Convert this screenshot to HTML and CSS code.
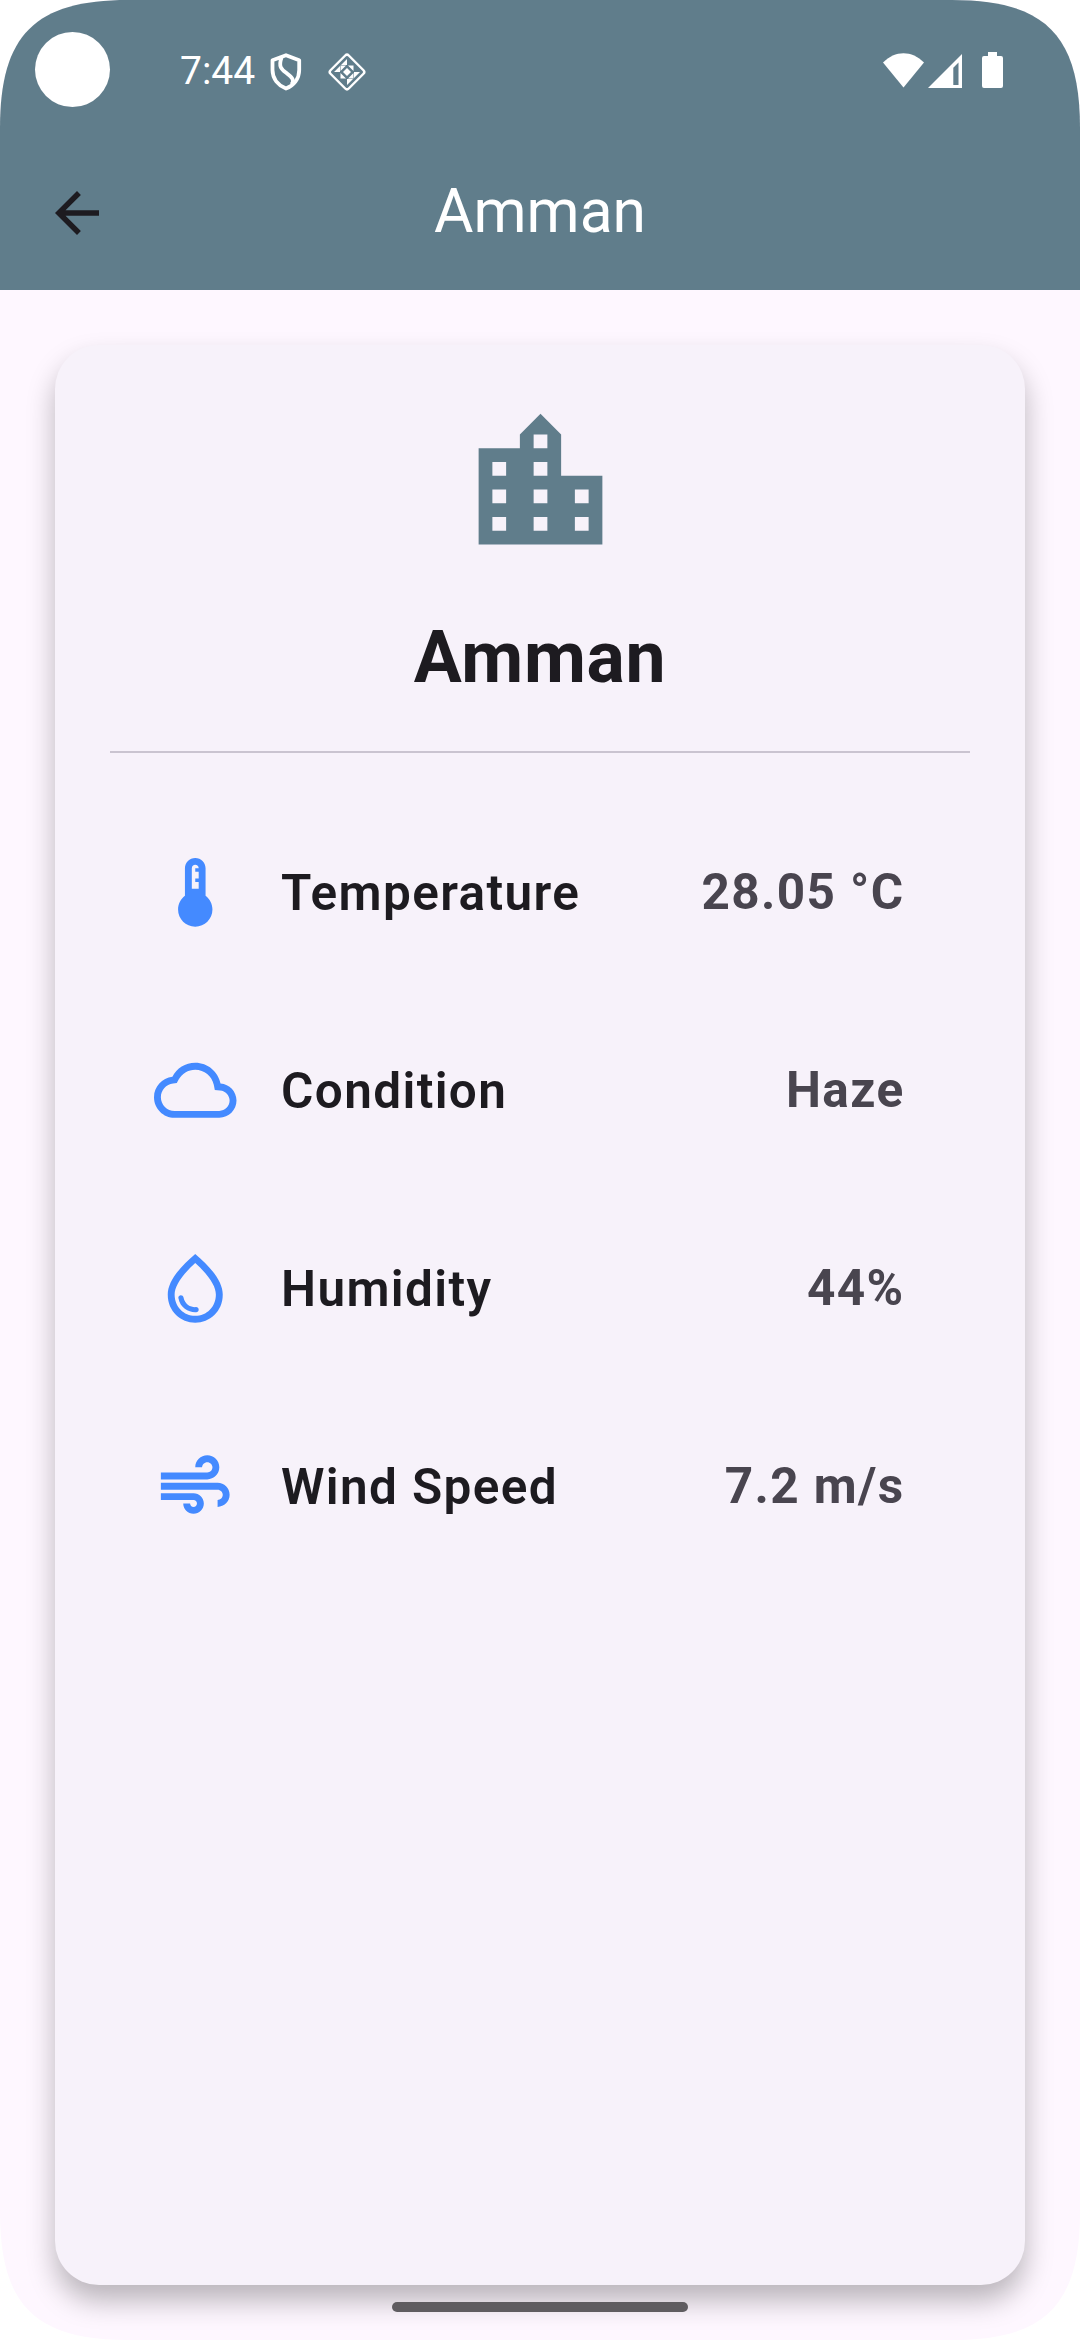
FILE: index.html
```html
<!DOCTYPE html>
<html lang="en">
<head>
<meta charset="utf-8">
<title>Amman</title>
<link rel="stylesheet" href="styles.css">
</head>
<body>
<div class="screen">
  <header class="top">
    <div class="status">
      <div class="status-left">
        <span class="camera"></span>
        <span class="clock">7:44</span>
        <svg class="shield" viewBox="0 0 32 38" fill="none" stroke="#fff" stroke-width="3.800" stroke-linejoin="round"><path d="M16 2.200 29.200 7.200V17C29.200 26 23.500 32.500 16 35.600 8.500 32.500 2.500 26 2.500 17V7.200Z"/><path d="M11.500 4.500C8 14.500 12 16.500 17 20.500S25 27 21.500 31.500"/></svg>
        <svg class="diamond" viewBox="-20 -20 40 40"><rect x="-12.900" y="-12.900" width="25.800" height="25.800" rx="2.500" transform="rotate(45)" fill="none" stroke="#fff" stroke-width="2.400"/><path fill="#fff" d="M0-13V-7H-6ZM-7-6V0H-13ZM13 0 7 6V0ZM0 13V7H6ZM-6.500-6.500H-1L-6.500-1ZM6.500-6.500V-1L1-6.500ZM6.500 6.500H1L6.500 1ZM-6.500 6.500V1L-1 6.500ZM0-4 4 0 0 4-4 0Z"/></svg>
      </div>
      <div class="status-right">
        <svg class="wifi" viewBox="0 0 41 35" fill="#fff"><path d="M0 9.500C12-3 29-3 41 9.500L20.500 34.500Z"/></svg>
        <svg class="signal" viewBox="0 0 34 34" fill="#fff" fill-rule="evenodd"><path d="M34 0V34H0ZM30.500 8.500 25.300 13.700V31H30.500Z"/></svg>
        <svg class="battery" viewBox="0 0 21 36" fill="#fff"><path d="M6 0H15V4H19Q21 4 21 6V34Q21 36 19 36H2Q0 36 0 34V6Q0 4 2 4H6Z"/></svg>
      </div>
    </div>
    <div class="appbar">
      <svg class="back" viewBox="0 0 24 24"><path d="M20 11H7.830l5.590-5.590L12 4l-8 8 8 8 1.410-1.410L7.830 13H20v-2z"/></svg>
      <h1 class="title">Amman</h1>
    </div>
  </header>
  <main class="card">
    <svg class="city-icon" viewBox="0 0 24 24"><path d="M15 11V5l-3-3-3 3v2H3v14h18V11h-6zm-8 8H5v-2h2v2zm0-4H5v-2h2v2zm0-4H5V9h2v2zm6 8h-2v-2h2v2zm0-4h-2v-2h2v2zm0-4h-2V9h2v2zm0-4h-2V5h2v2zm6 12h-2v-2h2v2zm0-4h-2v-2h2v2z"/></svg>
    <h2 class="city">Amman</h2>
    <hr class="rule">
    <ul class="list">
      <li class="row">
        <svg class="icon" viewBox="0 0 24 24"><path d="M15 13V5c0-1.660-1.340-3-3-3S9 3.340 9 5v8c-1.210.91-2 2.370-2 4 0 2.760 2.240 5 5 5s5-2.240 5-5c0-1.630-.79-3.090-2-4zm-4-8c0-.55.45-1 1-1s1 .45 1 1h-1v1h1v2h-1v1h1v2h-2V5z"/></svg>
        <span class="label">Temperature</span><span class="value">28.05 °C</span>
      </li>
      <li class="row">
        <svg class="icon" viewBox="0 0 24 24"><path d="M19.350 10.040C18.670 6.590 15.640 4 12 4 9.110 4 6.600 5.640 5.350 8.040 2.340 8.360 0 10.910 0 14c0 3.310 2.690 6 6 6h13c2.760 0 5-2.240 5-5 0-2.640-2.050-4.780-4.650-4.960zM19 18H6c-2.210 0-4-1.790-4-4 0-2.050 1.530-3.760 3.560-3.970l1.070-.11.5-.95C8.080 7.140 9.940 6 12 6c2.620 0 4.880 1.860 5.390 4.430l.3 1.500 1.530.11c1.560.1 2.780 1.410 2.780 2.960 0 1.650-1.350 3-3 3z"/></svg>
        <span class="label">Condition</span><span class="value">Haze</span>
      </li>
      <li class="row">
        <svg class="icon" viewBox="0 0 24 24"><path d="M12 2c-5.330 4.550-8 8.480-8 11.800 0 4.980 3.800 8.200 8 8.200s8-3.220 8-8.200c0-3.320-2.670-7.250-8-11.800zm0 18c-3.350 0-6-2.570-6-6.200 0-2.340 1.950-5.440 6-9.140 4.050 3.700 6 6.790 6 9.140 0 3.630-2.650 6.200-6 6.200zm-4.170-6c.37 0 .67.26.74.62.41 2.220 2.280 2.980 3.640 2.870.43-.02.79.32.79.75 0 .4-.32.73-.72.75-2.130.13-4.620-1.090-5.190-4.120-.08-.45.28-.87.74-.87z"/></svg>
        <span class="label">Humidity</span><span class="value">44%</span>
      </li>
      <li class="row">
        <svg class="icon" viewBox="0 0 24 24"><path d="M14.500 17c0 1.650-1.350 3-3 3s-3-1.350-3-3h2c0 .55.45 1 1 1s1-.45 1-1-.45-1-1-1H2v-2h9.500c1.650 0 3 1.350 3 3zM19 6.500C19 4.570 17.430 3 15.500 3S12 4.570 12 6.500h2c0-.83.67-1.500 1.500-1.500s1.500.67 1.500 1.500S16.330 8 15.500 8H2v2h13.500c1.930 0 3.500-1.570 3.500-3.500zm-.5 4.500H2v2h16.500c.83 0 1.500.67 1.500 1.500s-.67 1.500-1.500 1.500v2c1.930 0 3.500-1.570 3.500-3.500S20.430 11 18.500 11z"/></svg>
        <span class="label">Wind Speed</span><span class="value">7.2 m/s</span>
      </li>
    </ul>
  </main>
  <div class="home-bar"></div>
</div>
</body>
</html>
```
FILE: styles.css
```css
* { box-sizing: border-box; margin: 0; padding: 0; }
body { background: #fff; font-family: Roboto, sans-serif; }
svg { display: block; flex: none; }
.screen {
  position: relative;
  display: flex;
  flex-direction: column;
  width: 1080px;
  height: 2340px;
  background: #fef7ff;
  clip-path: path("M0 128C0 35 35 0 128 0H952C1045 0 1080 35 1080 128V2212C1080 2305 1045 2340 952 2340H128C35 2340 0 2305 0 2212Z");
}
.top { height: 290px; background: #607d8b; }
.status { display: flex; justify-content: space-between; height: 136px; padding: 32px 77px 0 35px; }
.status-left, .status-right { display: flex; align-items: flex-start; }
.camera { width: 75px; height: 75px; border-radius: 50%; background: #fff; }
.clock { margin: 14px 0 0 70px; width: 76px; font-size: 39px; line-height: 50px; color: #fff; white-space: nowrap; }
.shield { width: 32px; height: 38px; margin: 20.500px 0 0 13.500px; }
.diamond { width: 40px; height: 40px; margin: 19.500px 0 0 25px; }
.wifi { width: 41px; height: 35px; margin-top: 21px; }
.signal { width: 34px; height: 34px; margin: 22px 0 0 4px; }
.battery { width: 21px; height: 36px; margin: 20px 0 0 20px; }
.appbar { display: grid; grid-template-columns: 66px 1fr 66px; align-items: center; height: 154px; padding: 0 44px; }
.back { width: 66px; height: 66px; fill: #1d1b20; }
.title { margin-bottom: 4px; text-align: center; font-size: 60.500px; font-weight: 400; line-height: 77px; color: #fff; }
.card {
  display: flex;
  flex-direction: column;
  align-items: center;
  height: 1940px;
  margin: 55px 55px 0;
  padding: 55px;
  border-radius: 44px;
  background: #f7f2fa;
  box-shadow: 0 16px 28px rgba(0, 0, 0, .27);
}
.city-icon { width: 165px; height: 165px; fill: #607d8b; }
.city { margin-top: 45px; font-size: 71.500px; font-weight: 700; line-height: 96px; letter-spacing: .7px; color: #1d1b20; }
.rule { width: 860px; height: 2px; margin-top: 45px; border: 0; background: #cac4d0; }
.list { width: 860px; margin-top: 41px; list-style: none; }
.row { display: flex; align-items: center; height: 198px; padding: 0 65.500px 0 44px; }
.icon { width: 82.500px; height: 82.500px; margin-bottom: 1px; fill: #448aff; }
.label { margin-left: 44.500px; font-size: 49.500px; font-weight: 600; line-height: 66px; letter-spacing: 1.375px; color: #1d1b20; }
.value { margin: 0 0 2px auto; font-size: 49.500px; font-weight: 700; line-height: 66px; letter-spacing: 1.375px; color: #49454f; }
.home-bar { position: absolute; left: 392px; top: 2302px; width: 296px; height: 10px; border-radius: 5px; background: #5f5c60; }
```
